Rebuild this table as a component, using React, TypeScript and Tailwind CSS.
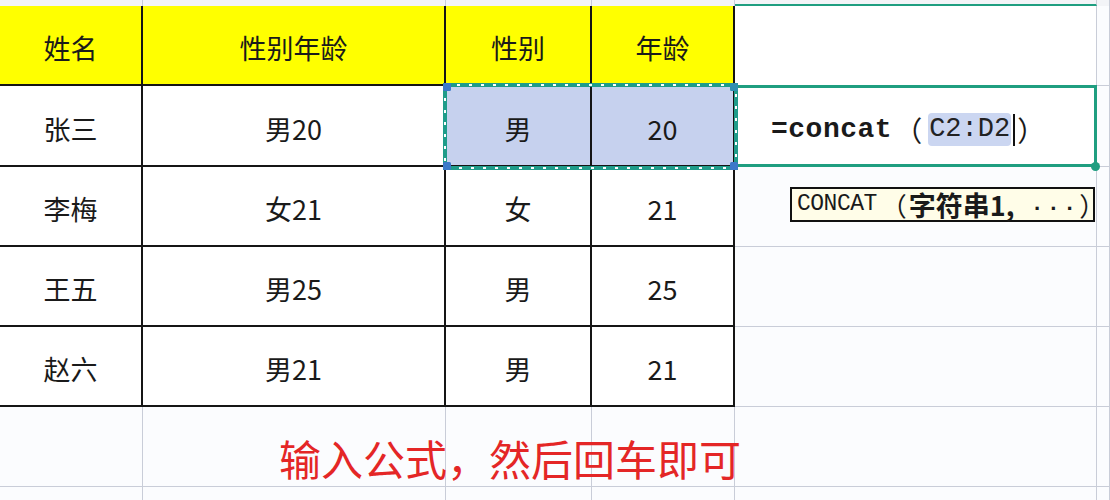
import React from 'react';

const cols = ['w-[143px]', 'w-[303px]', 'w-[146px]', 'w-[143px]', 'w-[362px]', 'w-[13px]'];

const header = ['姓名', '性别年龄', '性别', '年龄'];

const rows = [
  ['张三', '男20', '男', '20'],
  ['李梅', '女21', '女', '21'],
  ['王五', '男25', '男', '25'],
  ['赵六', '男21', '男', '21'],
];

const grayCell = 'border-r border-b border-[#c9cdd8]';
const blackCell = 'border-r-2 border-b-2 border-[#151515]';

const SelectionAnts = () => (
  <svg width="295" height="87" viewBox="0 0 295 87" className="block">
    <rect x="2" y="2" width="291" height="83" fill="none" stroke="#1f9c8a" strokeWidth="4" />
    <rect x="2" y="2" width="291" height="83" fill="none" stroke="#ffffff" strokeWidth="2" strokeDasharray="3 9" />
    <rect x="0" y="0" width="8" height="8" rx="1.5" fill="#3b78c9" />
    <rect x="287" y="0" width="8" height="8" rx="1.5" fill="#2f8fb0" />
    <rect x="0" y="79" width="8" height="8" rx="1.5" fill="#3b78c9" />
    <rect x="287" y="79" width="8" height="8" rx="1.5" fill="#3b78c9" />
  </svg>
);

export default function App() {
  return (
    <div className="relative w-[1110px] h-[500px] overflow-hidden bg-[#fbfcfe] text-[#1a1a1a] font-['Noto_Sans_CJK_SC','Noto_Sans',sans-serif]">
      {/* column header strip (cut off) */}
      <div className="flex h-[6px] bg-[#f3f4f7]">
        {cols.map((w, i) => (
          <div
            key={i}
            className={`${w} h-full ${i === 4 ? 'border-b-2 border-r border-b-[#1f9e80] border-r-[#c9cdd8]' : 'border-r border-[#c9cdd8]'}`}
          />
        ))}
      </div>

      <div className="grid grid-cols-[143px_303px_146px_143px_362px_13px] grid-rows-[80px_81px_80px_80px_80px_80px_13px]">
        {/* header row */}
        {header.map((h) => (
          <div key={h} className={`${blackCell} bg-[#ffff00] flex items-center justify-center pt-[6px] text-[27px]`}>
            {h}
          </div>
        ))}
        <div className={`${grayCell} bg-white`} />
        <div className={grayCell} />

        {/* data rows */}
        {rows.map((r, ri) => (
          <React.Fragment key={ri}>
            {r.map((v, ci) => (
              <div
                key={ci}
                className={`${blackCell} flex items-center justify-center pt-[7px] text-[27px] ${ri === 0 && ci >= 2 ? 'bg-[#c6d1ee]' : 'bg-white'}`}
              >
                {v}
              </div>
            ))}
            {ri === 0 ? (
              <div className="border-t-[3px] border-r-[3px] border-b-[3px] border-[#1f9e80] -mt-[1px] bg-white flex items-center pl-[36px] pt-[7px] whitespace-nowrap">
                <span className="font-['Liberation_Mono',monospace] font-bold text-[28px] leading-none tracking-[0.5px]">=concat</span>
                <span className="ml-[2px] text-[28px] leading-none font-['Noto_Sans_CJK_SC',sans-serif]">（</span>
                <span className="ml-[6px] bg-[#cbd6f1] rounded-[4px] px-[1px] py-[3px] font-['Liberation_Mono',monospace] text-[27px] leading-none text-[#222]">
                  C2:D2
                </span>
                <span className="ml-[2px] w-[2px] h-[32px] bg-[#111]" />
                <span className="ml-[2px] text-[28px] leading-none font-['Noto_Sans_CJK_SC',sans-serif]">）</span>
              </div>
            ) : ri === 1 ? (
              <div className={`${grayCell} pl-[55px] pt-[20px]`}>
                <div className="w-[305px] h-[35px] border-2 border-[#111] bg-[#fffde8] flex items-center pl-[5px] whitespace-nowrap leading-none">
                  <span className="font-['Liberation_Mono',monospace] text-[23px] tracking-[-0.5px]">CONCAT</span>
                  <span className="text-[26px] ml-[4px]">（</span>
                  <span className="text-[27px] font-bold ml-[2px]">字符串1,</span>
                  <span className="font-['Liberation_Mono',monospace] font-bold text-[22px] ml-[16px] tracking-[3px]">...</span>
                  <span className="text-[26px]">）</span>
                </div>
              </div>
            ) : (
              <div className={grayCell} />
            )}
            <div className={grayCell} />
          </React.Fragment>
        ))}

        {/* empty row with the hint text */}
        <div className={grayCell} />
        <div className={`${grayCell} relative overflow-visible`}>
          <div className="pl-[136px] pt-[30px] whitespace-nowrap text-[42px] leading-none text-[#e42626] font-['Noto_Sans_CJK_SC',sans-serif]">
            输入公式，然后回车即可
          </div>
        </div>
        <div className={grayCell} />
        <div className={grayCell} />
        <div className={grayCell} />
        <div className={grayCell} />

        {/* partial bottom row */}
        {cols.map((_, i) => (
          <div key={i} className="border-r border-[#c9cdd8]" />
        ))}
      </div>

      {/* marching ants around C2:D2 */}
      <div className="absolute left-[443px] top-[83px] pointer-events-none">
        <SelectionAnts />
      </div>

      {/* fill handle of the edit cell */}
      <div className="absolute left-[1091px] top-[162px] w-[9px] h-[9px] rounded-full bg-[#1f9e80]" />
    </div>
  );
}
